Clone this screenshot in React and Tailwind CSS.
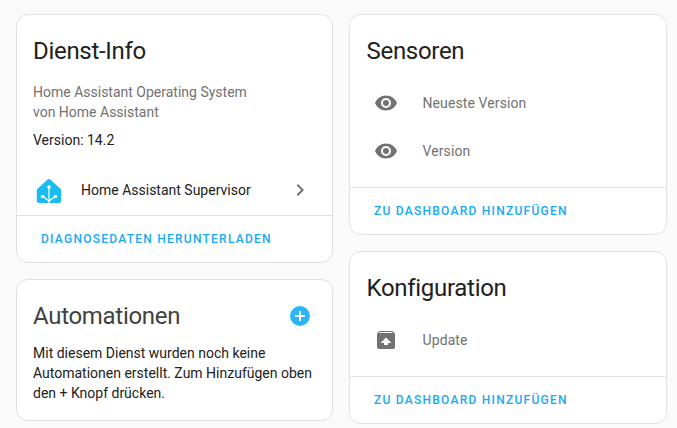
import React from 'react';

const MDI_EYE = 'M12,9A3,3 0 0,0 9,12A3,3 0 0,0 12,15A3,3 0 0,0 15,12A3,3 0 0,0 12,9M12,17A5,5 0 0,1 7,12A5,5 0 0,1 12,7A5,5 0 0,1 17,12A5,5 0 0,1 12,17M12,4.5C7,4.5 2.73,7.61 1,12C2.73,16.39 7,19.5 12,19.5C17,19.5 21.27,16.39 23,12C21.27,7.61 17,4.5 12,4.5Z';
const MDI_PACKAGE_UP = 'M20.54 5.23L19.15 3.55C18.88 3.21 18.47 3 18 3H6C5.53 3 5.12 3.21 4.84 3.55L3.46 5.23C3.17 5.57 3 6 3 6.5V19C3 20.1 3.9 21 5 21H19C20.1 21 21 20.1 21 19V6.5C21 6 20.83 5.57 20.54 5.23M12 9.5L17.5 15H14V17H10V15H6.5L12 9.5M5.12 5L5.93 4H17.93L18.87 5H5.12Z';
const MDI_PLUS_CIRCLE = 'M17,13H13V17H11V13H7V11H11V7H13V11H17M12,2A10,10 0 0,0 2,12A10,10 0 0,0 12,22A10,10 0 0,0 22,12A10,10 0 0,0 12,2Z';
const MDI_CHEVRON = 'M8.59,16.58L13.17,12L8.59,7.41L10,6L16,12L10,18L8.59,16.58Z';

function Icon({ d, className })
{
  return (
    <svg viewBox="0 0 24 24" className={className} fill="currentColor">
      <path d={d} />
    </svg>
  );
}

// addon logo, house with the branch mark
function HomeLogo()
{
  return (
    <svg viewBox="0 0 26 26" className="w-[26px] h-[26px] shrink-0">
      <path d="M11.7 2.6 Q13 1.6 14.3 2.6 L25.2 12.6 V23.5 a2.5 2.5 0 0 1 -2.5 2.5 H3.3 a2.5 2.5 0 0 1 -2.5 -2.5 V12.6 Z" fill="#18bcf2" />
      <g stroke="#fff" strokeWidth="1.2" fill="none">
        <path d="M13 10 V26" />
        <path d="M13 24 L7 19.5" />
        <path d="M13 24 L19 19.5" />
      </g>
      <g fill="#fff">
        <circle cx="13" cy="10" r="1.8" />
        <circle cx="6.7" cy="19.5" r="1.8" />
        <circle cx="19.3" cy="19.5" r="1.8" />
      </g>
    </svg>
  );
}

function Card({ children, className = '' })
{
  return (
    <div className={`bg-white border border-[#e0e0e0] rounded-xl overflow-hidden ${className}`}>
      {children}
    </div>
  );
}

function CardAction({ label })
{
  return (
    <div className="border-t border-[#e0e0e0] h-[47px] flex items-center pl-6 text-[12px] font-medium tracking-[1.25px] text-[#18a9f5]">
      {label}
    </div>
  );
}

function EntityRow({ d, label })
{
  return (
    <div className="h-12 flex items-center pl-6">
      <Icon d={d} className="w-6 h-6 text-[#727272]" />
      <span className="ml-[24.5px] text-sm tracking-[0.1px] text-[#727272]">{label}</span>
    </div>
  );
}

export default function App()
{
  return (
    <div className="w-[677px] h-[428px] overflow-hidden bg-[#fafafa] pt-[14px] pl-4 pr-[10px] flex gap-4 font-['Roboto',sans-serif] text-[#212121]">
      <div className="w-[317px] flex flex-col gap-4 shrink-0">
        <Card className="h-[249px]">
          <div className="pt-5 px-4 text-2xl leading-8 tracking-[-0.3px]">Dienst-Info</div>
          <div className="px-4 pt-[15px] text-sm leading-5 text-[#727272]">
            <div>Home Assistant Operating System</div>
            <div>von Home Assistant</div>
          </div>
          <div className="px-4 pt-2 text-sm leading-5">Version: 14.2</div>
          <div className="mt-4 mb-px h-[48px] flex items-center pl-[19px] pr-5">
            <HomeLogo />
            <span className="ml-[19px] flex-1 text-sm">Home Assistant Supervisor</span>
            <Icon d={MDI_CHEVRON} className="w-6 h-6 text-[#727272]" />
          </div>
          <CardAction label="DIAGNOSEDATEN HERUNTERLADEN" />
        </Card>
        <Card className="h-[142px]">
          <div className="pt-5 pl-4 pr-5 flex items-center justify-between text-2xl leading-8 tracking-[-0.3px] text-[#424242]">
            <span>Automationen</span>
            <Icon d={MDI_PLUS_CIRCLE} className="w-6 h-6 text-[#29b6f6]" />
          </div>
          <div className="px-4 pt-[11px] text-sm leading-5">
            Mit diesem Dienst wurden noch keine Automationen erstellt. Zum Hinzufügen oben den + Knopf drücken.
          </div>
        </Card>
      </div>
      <div className="w-[318px] flex flex-col gap-4 shrink-0">
        <Card className="h-[221px]">
          <div className="pt-5 pl-[16.5px] pr-4 text-2xl leading-8 tracking-[-0.3px]">Sensoren</div>
          <div className="pt-3">
            <EntityRow d={MDI_EYE} label="Neueste Version" />
            <EntityRow d={MDI_EYE} label="Version" />
          </div>
          <div className="mt-3">
            <CardAction label="ZU DASHBOARD HINZUFÜGEN" />
          </div>
        </Card>
        <Card className="h-[173px]">
          <div className="pt-5 pl-[16.5px] pr-4 text-2xl leading-8 tracking-[-0.3px]">Konfiguration</div>
          <div className="pt-3">
            <EntityRow d={MDI_PACKAGE_UP} label="Update" />
          </div>
          <div className="mt-3">
            <CardAction label="ZU DASHBOARD HINZUFÜGEN" />
          </div>
        </Card>
      </div>
    </div>
  );
}
